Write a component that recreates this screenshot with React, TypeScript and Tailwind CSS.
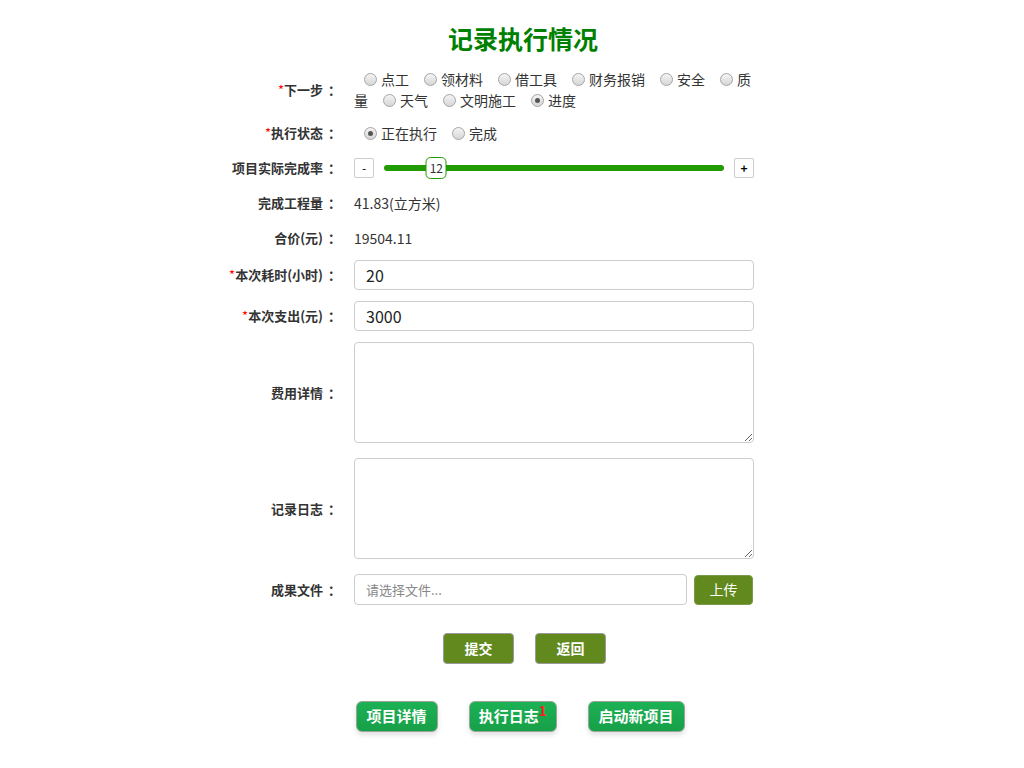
import { Fragment, useState } from "react";

const steps = ["点工", "领材料", "借工具", "财务报销", "安全", "质", "量", "天气", "文明施工", "进度"];

function Radio({ checked }: { checked?: boolean }) {
  return (
    <span className="inline-block align-[-1px] ml-[10px] mr-[4px] w-[13px] h-[13px] rounded-full border border-[#a5a5a5] bg-gradient-to-b from-[#f4f4f4] to-[#d6d6d6] relative">
      {checked && <span className="absolute left-[3px] top-[3px] w-[5px] h-[5px] rounded-full bg-[#555]" />}
    </span>
  );
}

function Label({ text, required }: { text: string; required?: boolean }) {
  return (
    <div className="w-[145px] shrink-0 text-right pr-[2px] text-[13px] font-bold text-[#333]">
      {required && <span className="text-[#ff0000] font-normal">*</span>}
      {text}
      <span className="inline-block pl-[5px]">：</span>
    </div>
  );
}

export default function App() {
  const [rate, setRate] = useState(12);

  return (
    <div className="w-full min-h-[768px] bg-white text-[#333]" style={{ fontFamily: '"Noto Sans CJK SC", "Noto Sans", sans-serif' }}>
      <h1 className="text-center text-[25px] font-bold text-[#008000] pt-[20px] pl-[22px] leading-[36px]">记录执行情况</h1>

      <div className="w-[600px] ml-[198px] mt-[13px]">
        {/* 下一步 */}
        <div className="flex items-center h-[42px]">
          <Label text="下一步" required />
          <div className="w-[400px] ml-[11px] text-[14px] leading-[21px]">
            {steps.map((s, i) => {
              // "质量" wraps between the two characters, as in the original page
              if (s === "质") return <span key={s}><Radio />{s}</span>;
              if (s === "量") return <Fragment key={s}><br /><span className="mr-[5px]">{s}</span></Fragment>;
              return (
                <span key={s} className="mr-[5px]">
                  <Radio checked={i === steps.length - 1} />
                  {s}
                </span>
              );
            })}
          </div>
        </div>

        {/* 执行状态 */}
        <div className="flex items-center h-[22px] mt-[11px]">
          <Label text="执行状态" required />
          <div className="ml-[11px] text-[14px] leading-[21px]">
            <Radio checked />
            <span className="mr-[5px]">正在执行</span>
            <Radio />
            <span>完成</span>
          </div>
        </div>

        {/* 完成率 */}
        <div className="flex items-center h-[22px] mt-[13px]">
          <Label text="项目实际完成率" />
          <div className="w-[400px] ml-[11px] flex items-center">
            <button onClick={() => setRate(Math.max(0, rate - 1))} className="w-[20px] h-[20px] border border-[#ccc] rounded-[2px] bg-white text-[12px] leading-none text-[#000]">-</button>
            <div className="relative flex-1 mx-[10px] h-[6px] rounded-full bg-[#229b00]">
              <div
                className="absolute top-1/2 -translate-y-1/2 -translate-x-1/2 w-[21px] h-[22px] bg-white border border-[#229b00] rounded-[5px] text-[12px] leading-[20px] text-center text-[#333]"
                style={{ left: `calc(${rate * 0.94}% + 14px)` }}
              >
                {rate}
              </div>
            </div>
            <button onClick={() => setRate(Math.min(100, rate + 1))} className="w-[20px] h-[20px] border border-[#ccc] rounded-[2px] bg-white text-[12px] font-bold leading-none text-[#000]">+</button>
          </div>
        </div>

        {/* 完成工程量 */}
        <div className="flex items-center h-[22px] mt-[13px]">
          <Label text="完成工程量" />
          <div className="ml-[11px] text-[14px]">41.83(立方米)</div>
        </div>

        {/* 合价 */}
        <div className="flex items-center h-[22px] mt-[13px]">
          <Label text="合价(元)" />
          <div className="ml-[11px] text-[14px]">19504.11</div>
        </div>

        {/* 本次耗时 */}
        <div className="flex items-center mt-[11px]">
          <Label text="本次耗时(小时)" required />
          <input defaultValue="20" className="ml-[11px] w-[400px] h-[30px] border border-[#ccc] rounded-[4px] px-[11px] text-[16px] text-[#222] outline-none" />
        </div>

        {/* 本次支出 */}
        <div className="flex items-center mt-[11px]">
          <Label text="本次支出(元)" required />
          <input defaultValue="3000" className="ml-[11px] w-[400px] h-[30px] border border-[#ccc] rounded-[4px] px-[11px] text-[16px] text-[#222] outline-none" />
        </div>

        {/* 费用详情 */}
        <div className="flex items-center mt-[11px]">
          <Label text="费用详情" />
          <textarea className="block ml-[11px] w-[400px] h-[101px] border border-[#ccc] rounded-[4px] outline-none" />
        </div>

        {/* 记录日志 */}
        <div className="flex items-center mt-[15px]">
          <Label text="记录日志" />
          <textarea className="block ml-[11px] w-[400px] h-[101px] border border-[#ccc] rounded-[4px] outline-none" />
        </div>

        {/* 成果文件 */}
        <div className="flex items-center mt-[15px]">
          <Label text="成果文件" />
          <input placeholder="请选择文件..." className="ml-[11px] w-[333px] h-[31px] border border-[#ccc] rounded-[4px] px-[11px] text-[13px] placeholder:text-[#888] outline-none" />
          <button className="ml-[7px] w-[59px] h-[30px] rounded-[4px] bg-[#61891e] border border-[#7c9a4c] text-white text-[14px]">上传</button>
        </div>
      </div>

      <div className="flex justify-center gap-[21px] mt-[28px] pl-[25px]">
        <button className="w-[71px] h-[31px] rounded-[4px] bg-[#61891e] border border-[#9a9a9a] text-white text-[14px] font-bold">提交</button>
        <button className="w-[71px] h-[31px] rounded-[4px] bg-[#61891e] border border-[#9a9a9a] text-white text-[14px] font-bold">返回</button>
      </div>

      <div className="flex justify-center gap-[31px] mt-[37px] pl-[16px]">
        <button className="w-[82px] h-[31px] rounded-[6px] bg-gradient-to-b from-[#1cb154] to-[#17a048] border border-[#9aa59c] text-white text-[15px] font-bold shadow-[0_3px_5px_rgba(0,0,0,0.12)]">项目详情</button>
        <button className="w-[88px] h-[31px] rounded-[6px] bg-gradient-to-b from-[#1cb154] to-[#17a048] border border-[#9aa59c] text-white text-[15px] font-bold shadow-[0_3px_5px_rgba(0,0,0,0.12)]">
          执行日志<sup className="text-[#ff1a1a] text-[13px] font-bold relative -top-[6px]">1</sup>
        </button>
        <button className="w-[97px] h-[31px] rounded-[6px] bg-gradient-to-b from-[#1cb154] to-[#17a048] border border-[#9aa59c] text-white text-[15px] font-bold shadow-[0_3px_5px_rgba(0,0,0,0.12)]">启动新项目</button>
      </div>
    </div>
  );
}
